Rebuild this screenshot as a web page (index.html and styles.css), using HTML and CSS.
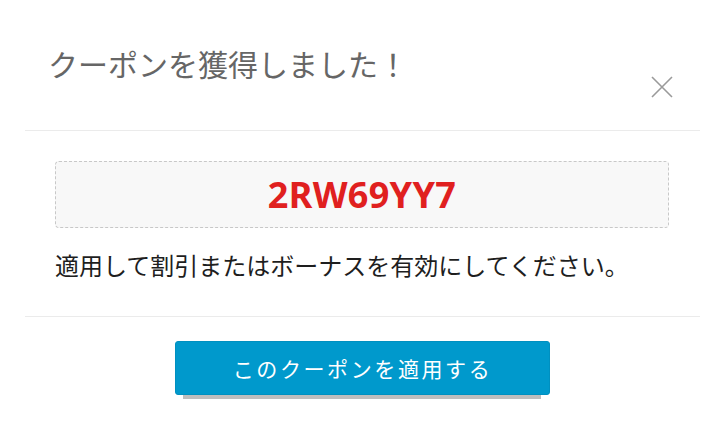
FILE: index.html
```html
<!DOCTYPE html>
<html lang="ja">
<head>
<meta charset="utf-8">
<title>クーポン</title>
<link rel="stylesheet" href="styles.css">
</head>
<body>
<div class="modal">
  <div class="modal-header">
    <h1 class="modal-title">クーポンを獲得しました！</h1>
    <button class="close" aria-label="閉じる">
      <svg width="24" height="24" viewBox="0 0 24 24"><path d="M2 2 L22 22 M22 2 L2 22" stroke="#9a9a9a" stroke-width="1.6" fill="none"/></svg>
    </button>
  </div>
  <div class="modal-body">
    <div class="coupon-code">2RW69YY7</div>
    <p class="note">適用して割引またはボーナスを有効にしてください。</p>
  </div>
  <div class="modal-footer">
    <div class="apply-wrap">
      <button class="apply">このクーポンを適用する</button>
      <div class="apply-shadow"></div>
    </div>
  </div>
</div>
</body>
</html>
```
FILE: styles.css
```css
html, body {
  margin: 0;
  padding: 0;
  background: #fff;
}
body {
  font-family: "Noto Sans CJK JP", "Noto Sans", sans-serif;
}
.modal {
  width: 675px;
  margin-left: 25px;
  padding-bottom: 30px;
}
.modal-header {
  display: flex;
  justify-content: space-between;
  align-items: flex-start;
  height: 131px;
  padding: 43px 26px 0 23px;
  box-sizing: border-box;
  border-bottom: 1px solid #ebebeb;
}
.modal-title {
  margin: 0;
  font-size: 30px;
  line-height: 40px;
  font-weight: 400;
  color: #666;
}
.close {
  margin-top: 32px;
  padding: 0;
  border: 0;
  background: none;
  width: 24px;
  height: 24px;
  display: flex;
}
.modal-body {
  padding: 30px 31px 34px 30px;
  border-bottom: 1px solid #ebebeb;
}
.coupon-code {
  height: 65px;
  display: flex;
  align-items: center;
  justify-content: center;
  background: #f8f8f8;
  border: 1px dashed #c8c8c8;
  border-radius: 4px;
  color: #e0201f;
  font-family: "Noto Sans", "Open Sans", sans-serif;
  font-weight: 700;
  font-size: 36px;
  letter-spacing: 0.3px;
}
.note {
  margin: 20px 0 0;
  font-size: 24px;
  line-height: 34px;
  color: #1e1e1e;
  white-space: nowrap;
}
.modal-footer {
  display: flex;
  justify-content: center;
  padding-top: 24px;
}
.apply-wrap {
  display: flex;
  flex-direction: column;
}
.apply {
  -webkit-appearance: none;
  appearance: none;
  width: 375px;
  height: 54px;
  background: #0099cc;
  border: 1px solid #0090c0;
  border-radius: 3px;
  color: #fff;
  font-family: "Noto Sans CJK JP", sans-serif;
  font-size: 21px;
  letter-spacing: 2.6px;
  padding: 0;
}
.apply-shadow {
  height: 4px;
  margin: 0 9px 0 8px;
  background: #bebebe;
}
```
